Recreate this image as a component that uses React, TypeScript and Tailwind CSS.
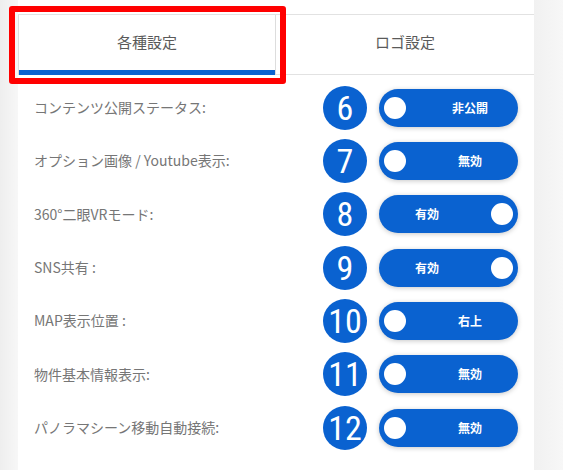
import React from 'react';

type Row = {
  num: number;
  label: string;
  value: string;
  on: boolean;
};

const rows: Row[] = [
  { num: 6, label: 'コンテンツ公開ステータス:', value: '非公開', on: false },
  { num: 7, label: 'オプション画像 / Youtube表示:', value: '無効', on: false },
  { num: 8, label: '360°二眼VRモード:', value: '有効', on: true },
  { num: 9, label: 'SNS共有 :', value: '有効', on: true },
  { num: 10, label: 'MAP表示位置 :', value: '右上', on: false },
  { num: 11, label: '物件基本情報表示:', value: '無効', on: false },
  { num: 12, label: 'パノラマシーン移動自動接続:', value: '無効', on: false },
];

const jp = { fontFamily: '"Noto Sans CJK JP", "Noto Sans", sans-serif' };

function NumberBadge({ n }: { n: number }) {
  return (
    <div className="flex h-[44px] w-[44px] shrink-0 items-center justify-center rounded-full bg-[#0a62d0]">
      <span
        className="text-[34px] leading-none text-white"
        style={{ fontFamily: '"Liberation Sans Narrow", "Roboto Condensed", Roboto, sans-serif' }}
      >
        {n}
      </span>
    </div>
  );
}

function Toggle({ on, value }: { on: boolean; value: string }) {
  return (
    <div
      className={`relative flex h-[38px] w-[139px] shrink-0 items-center rounded-full bg-[#0a62d0] shadow-[0_1px_5px_rgba(0,0,0,0.22)] ${
        on ? 'pr-[43px]' : 'pl-[43px]'
      }`}
    >
      <span className="flex-1 text-center text-[12px] font-bold text-white" style={jp}>
        {value}
      </span>
      <span
        className={`absolute top-[8px] h-[22px] w-[22px] rounded-full bg-white ${on ? 'right-[5px]' : 'left-[5px]'}`}
      />
    </div>
  );
}

export default function App() {
  return (
    <div className="relative flex h-[470px] w-[563px] overflow-hidden bg-[#f4f4f4]">
      {/* left strip */}
      <div className="w-[18px] shrink-0 bg-gradient-to-r from-[#eeeeee] to-[#f7f7f7]" />

      {/* panel */}
      <div className="flex w-[516px] shrink-0 flex-col bg-white pt-[14px]">
        {/* tabs */}
        <div className="flex h-[61px] border-t border-[#e2e2e2]">
          <div className="flex w-[258px] flex-col border-x border-[#dddddd]">
            <div className="flex flex-1 items-center justify-center text-[15px] text-[#5a5a5a]" style={jp}>
              各種設定
            </div>
            <div className="h-[5px] bg-[#0a62d0]" />
          </div>
          <div
            className="flex w-[258px] items-center justify-center border-b border-[#e2e2e2] pb-[5px] text-[15px] text-[#5a5a5a]"
            style={jp}
          >
            ロゴ設定
          </div>
        </div>

        {/* settings */}
        <div className="flex flex-col pt-[6px]">
          {rows.map((r) => (
            <div key={r.num} className="flex h-[53.33px] items-center pl-[16px] pr-[16px]">
              <div className="flex-1 text-[14px] text-[#767676]" style={jp}>
                {r.label}
              </div>
              <NumberBadge n={r.num} />
              <div className="w-[12px]" />
              <Toggle on={r.on} value={r.value} />
            </div>
          ))}
        </div>
      </div>

      {/* right strip */}
      <div className="flex-1 bg-gradient-to-r from-[#f1f1f1] to-[#f7f7f7]" />

      {/* annotation highlight */}
      <div className="absolute left-[9px] top-[6px] h-[78px] w-[277px] rounded-[3px] border-[6px] border-[#ff0000]" />
    </div>
  );
}
